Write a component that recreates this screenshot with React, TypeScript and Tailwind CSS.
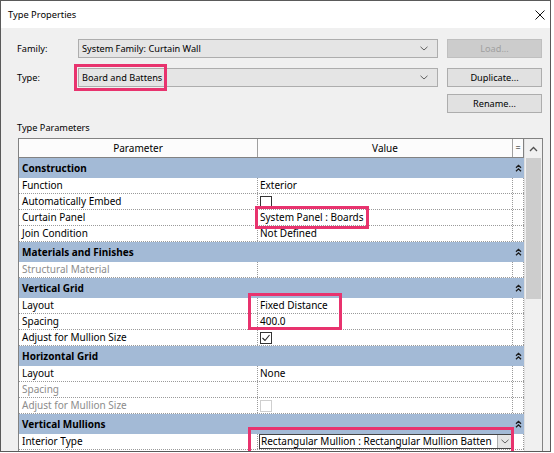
import React from 'react'

type Row =
  | { kind: 'group'; label: string }
  | {
      kind: 'row'
      label: string
      value?: string
      check?: 'on' | 'off' | 'dis'
      disabled?: boolean
      combo?: boolean
    }

const rows: Row[] = [
  { kind: 'group', label: 'Construction' },
  { kind: 'row', label: 'Function', value: 'Exterior' },
  { kind: 'row', label: 'Automatically Embed', check: 'off' },
  { kind: 'row', label: 'Curtain Panel', value: 'System Panel : Boards' },
  { kind: 'row', label: 'Join Condition', value: 'Not Defined' },
  { kind: 'group', label: 'Materials and Finishes' },
  { kind: 'row', label: 'Structural Material', disabled: true },
  { kind: 'group', label: 'Vertical Grid' },
  { kind: 'row', label: 'Layout', value: 'Fixed Distance' },
  { kind: 'row', label: 'Spacing', value: '400.0' },
  { kind: 'row', label: 'Adjust for Mullion Size', check: 'on' },
  { kind: 'group', label: 'Horizontal Grid' },
  { kind: 'row', label: 'Layout', value: 'None' },
  { kind: 'row', label: 'Spacing', disabled: true },
  { kind: 'row', label: 'Adjust for Mullion Size', disabled: true, check: 'dis' },
  { kind: 'group', label: 'Vertical Mullions' },
  {
    kind: 'row',
    label: 'Interior Type',
    combo: true,
    value: 'Rectangular Mullion : Rectangular Mullion Batten',
  },
]

function ChevronDown() {
  return (
    <svg width="8" height="5" viewBox="0 0 8 5">
      <path d="M0.5 0.8 L4 4 L7.5 0.8" fill="none" stroke="#606060" strokeWidth="1" />
    </svg>
  )
}

function DoubleUp() {
  return (
    <svg width="7" height="8" viewBox="0 0 7 8">
      <path
        d="M1 3.8 L3.5 1.3 L6 3.8 M1 7.3 L3.5 4.8 L6 7.3"
        fill="none"
        stroke="#1a1a1a"
        strokeWidth="1.3"
      />
    </svg>
  )
}

function Check({ state }: { state: 'on' | 'off' | 'dis' }) {
  return (
    <div
      className={`w-[12px] h-[12px] bg-white border flex items-center justify-center ${
        state === 'dis' ? 'border-[#cfcfcf]' : 'border-[#333333]'
      }`}
    >
      {state === 'on' && (
        <svg width="10" height="10" viewBox="0 0 10 10">
          <path d="M1.5 5 L4 7.5 L8.5 2" fill="none" stroke="#222" strokeWidth="1.1" />
        </svg>
      )}
    </div>
  )
}

function Highlight({ className }: { className: string }) {
  return <div className={`absolute border-[3px] border-[#e8336e] pointer-events-none ${className}`} />
}

export default function App() {
  return (
    <div className="w-[554px] h-[453px] bg-white font-['Noto_Sans',sans-serif] text-[10px] text-black">
      <div className="w-[551px] h-[452px] border border-[#5a5a5a] bg-[#f0f0f0] flex flex-col overflow-hidden">
        {/* title bar */}
        <div className="h-[27px] bg-white flex items-center justify-between pl-[7px] pr-[5px] shrink-0">
          <span className="text-[9.3px]">Type Properties</span>
          <svg width="10" height="10" viewBox="0 0 10 10">
            <path d="M0.5 0.5 L9.5 9.5 M9.5 0.5 L0.5 9.5" stroke="#111" strokeWidth="1" />
          </svg>
        </div>

        {/* family / type */}
        <div className="pl-[16px] pr-[7px] pt-[11px] grid grid-cols-[61px_360px_104px] items-center text-[9.2px]">
          <span>Family:</span>
          <div className="h-[19px] bg-[#e5e5e5] border border-[#adadad] flex items-center justify-between pl-[3px] pr-[9px]">
            <span>System Family: Curtain Wall</span>
            <ChevronDown />
          </div>
          <button className="ml-[9px] w-[95px] h-[19px] bg-[#cccccc] border border-[#bfbfbf] text-[#a0a0a0]">
            Load...
          </button>

          <span className="mt-[10px]">Type:</span>
          <div className="mt-[10px] relative h-[19px] bg-[#e5e5e5] border border-[#adadad] flex items-center justify-between pl-[3px] pr-[9px]">
            <span>Board and Battens</span>
            <ChevronDown />
            <Highlight className="-left-[5px] -top-[5px] w-[93px] h-[27px]" />
          </div>
          <button className="mt-[10px] ml-[9px] w-[95px] h-[19px] bg-[#e1e1e1] border border-[#adadad]">
            Duplicate...
          </button>

          <span />
          <span />
          <button className="mt-[7px] ml-[9px] w-[95px] h-[19px] bg-[#e1e1e1] border border-[#adadad]">
            Rename...
          </button>
        </div>

        <div className="pl-[16px] mt-[8px] h-[13px] leading-[13px] text-[9.2px]">Type Parameters</div>

        {/* table */}
        <div className="ml-[17px] mt-[4px] w-[525px] flex-1 border border-b-0 border-[#828282] bg-white flex relative">
          <div className="w-[505px] flex flex-col">
            <div className="h-[19px] flex border-b border-[#828282] bg-[#fcfcfc]">
              <div className="w-[239px] border-r border-[#a0a0a0] flex items-center justify-center">Parameter</div>
              <div className="w-[255px] border-r border-[#a0a0a0] flex items-center justify-center">Value</div>
              <div className="w-[11px] border-r border-[#828282] flex items-center justify-center text-[9px]">=</div>
            </div>
            {rows.map((r, i) =>
              r.kind === 'group' ? (
                <div key={i} className="h-[20px] bg-[#a3bad6] flex items-center">
                  <span className="w-[494px] pl-[3px] font-bold">{r.label}</span>
                  <span className="w-[11px] flex justify-center">
                    <DoubleUp />
                  </span>
                </div>
              ) : (
                <div key={i} className="h-[16px] flex border-b border-dotted border-[#9a9a9a] leading-[15px]">
                  <div
                    className={`w-[239px] pl-[3px] border-r border-dotted border-[#9a9a9a] ${
                      r.disabled ? 'text-[#8c8c8c]' : ''
                    }`}
                  >
                    {r.label}
                  </div>
                  <div className="w-[255px] border-r border-dotted border-[#9a9a9a] flex items-center">
                    {r.combo ? (
                      <div className="ml-[1px] w-[253px] h-[15px] border border-[#444] flex items-center justify-between">
                        <span className="pl-[1px]">{r.value}</span>
                        <span className="w-[14px] h-[13px] bg-[#e5e5e5] border-l border-[#adadad] flex items-center justify-center">
                          <ChevronDown />
                        </span>
                      </div>
                    ) : r.check ? (
                      <span className="pl-[2px]">
                        <Check state={r.check} />
                      </span>
                    ) : (
                      <span className="pl-[2px]">{r.value}</span>
                    )}
                  </div>
                  <div className="w-[11px] border-r border-dotted border-[#9a9a9a]" />
                </div>
              )
            )}
          </div>

          {/* scrollbar */}
          <div className="w-[18px] flex flex-col bg-[#f0f0f0] border-l border-[#e0e0e0]">
            <div className="h-[19px] flex items-center justify-center">
              <svg width="9" height="6" viewBox="0 0 9 6">
                <path d="M1 5 L4.5 1.5 L8 5" fill="none" stroke="#505050" strokeWidth="1.3" />
              </svg>
            </div>
            <div className="ml-[1px] w-[15px] h-[141px] bg-[#cdcdcd]" />
          </div>

          <Highlight className="left-[236px] top-[67px] w-[114px] h-[23px]" />
          <Highlight className="left-[229px] top-[154px] w-[94px] h-[37px]" />
          <Highlight className="left-[229px] top-[288px] w-[266px] h-[27px]" />
        </div>
      </div>
    </div>
  )
}
